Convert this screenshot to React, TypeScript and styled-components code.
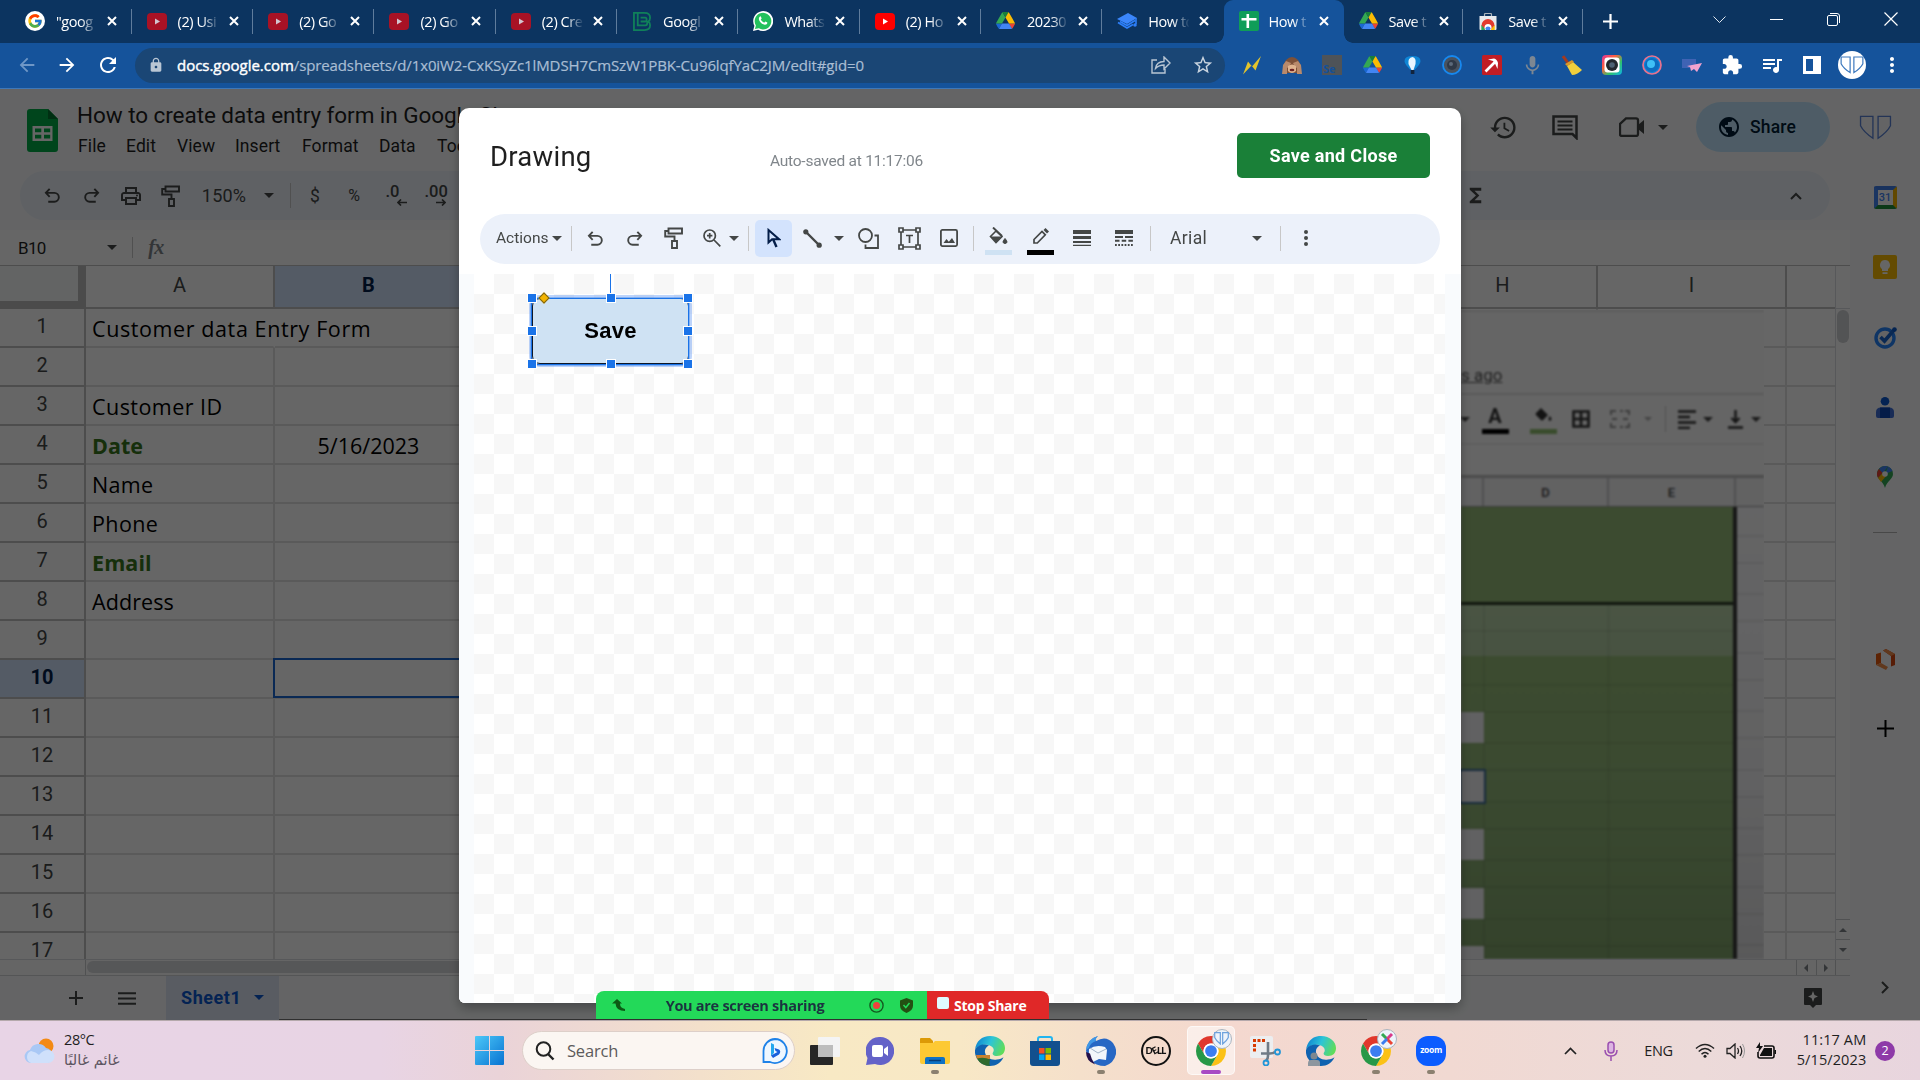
import React from "react";
import styled, { createGlobalStyle, css } from "styled-components";
import { FcGoogle } from "react-icons/fc";
import {
  MdArrowBack, MdArrowForward, MdRefresh, MdLock, MdStarOutline, MdExtension, MdQueueMusic,
  MdHistory, MdPublic, MdOutlinePrint, MdFunctions, MdMic, MdMoreVert,
} from "react-icons/md";

const Global = createGlobalStyle`
  html, body { margin: 0; padding: 0; overflow: hidden; }
  body { width: 1920px; height: 1080px; font-family: "Open Sans", "Noto Sans", sans-serif; }
  * { box-sizing: border-box; }
  svg { display: block; flex: none; }
`;

const ROBOTO = `Roboto, "Liberation Sans", sans-serif`;
const SEGOE = `"Open Sans", "Noto Sans", sans-serif`;

/* ---------- shared parts ---------- */

const Text = styled.span<{ $size: number; $color?: string; $weight?: number; $ls?: number; $font?: string }>`
  font-family: ${(p) => p.$font || ROBOTO};
  font-size: ${(p) => p.$size}px;
  font-weight: ${(p) => p.$weight || 400};
  letter-spacing: ${(p) => p.$ls || 0}px;
  color: ${(p) => p.$color || "#1f1f1f"};
  white-space: nowrap;
`;

const Slot = styled.div<{ $w: number; $start?: boolean }>`
  width: ${(p) => p.$w}px;
  height: 100%;
  flex: none;
  display: flex;
  align-items: center;
  justify-content: ${(p) => (p.$start ? "flex-start" : "center")};
`;

const Divider = styled.i<{ $h: number; $color?: string }>`
  width: 1px;
  height: ${(p) => p.$h}px;
  background: ${(p) => p.$color || "#c7c7c7"};
`;

const Caret = styled.i<{ $color?: string; $s?: number }>`
  width: 0;
  height: 0;
  border: ${(p) => p.$s || 5}px solid transparent;
  border-top-color: ${(p) => p.$color || "#444746"};
  border-bottom: 0;
`;

const Spacer = styled.div`
  flex: 1;
`;

type SvgProps = { w: number; h?: number; vb?: string; children: React.ReactNode };
const Icon = ({ w, h, vb = "0 0 24 24", children }: SvgProps) => (
  <svg width={w} height={h || w} viewBox={vb} fill="none" preserveAspectRatio="none">{children}</svg>
);

/* ---------- frame ---------- */

const Screen = styled.div`
  position: relative;
  width: 1920px;
  height: 1080px;
  display: flex;
  flex-direction: column;
  overflow: hidden;
`;

/* ---------- browser tabs ---------- */

const TabStrip = styled.div`
  height: 43px;
  flex: none;
  display: flex;
  align-items: center;
  background: #0c3460;
  padding-left: 10px;
`;

const Tab = styled.div<{ $w: number; $active?: boolean; $line?: boolean }>`
  width: ${(p) => p.$w}px;
  height: 43px;
  flex: none;
  display: flex;
  align-items: center;
  padding: 0 0 1px 15px;
  position: relative;
  ${(p) =>
    p.$active &&
    css`
      background: #15539b;
      border-radius: 9px 9px 0 0;
      &::before, &::after {
        content: "";
        position: absolute;
        bottom: 0;
        width: 9px;
        height: 9px;
      }
      &::before { left: -9px; background: radial-gradient(circle at 0 0, transparent 8.5px, #15539b 9px); }
      &::after { right: -9px; background: radial-gradient(circle at 100% 0, transparent 8.5px, #15539b 9px); }
    `}
  ${(p) =>
    p.$line &&
    css`
      &::after {
        content: "";
        position: absolute;
        right: 0;
        top: 9px;
        height: 25px;
        width: 1px;
        background: #5f7c9c;
      }
    `}
`;

const Favicon = styled.div`
  width: 20px;
  height: 20px;
  flex: none;
  display: flex;
  align-items: center;
  justify-content: center;
`;

const TabTitle = styled.div<{ $w: number }>`
  margin-left: ${(p) => p.$w - 30}px;
  width: ${(p) => p.$w}px;
  flex: none;
  white-space: nowrap;
  color: #fff;
  font: 400 14.5px ${SEGOE};
  letter-spacing: -0.45px;
  mask-image: linear-gradient(90deg, #000 60%, transparent 102%);
`;

const GoogleDisc = styled.div`
  width: 20px;
  height: 20px;
  border-radius: 50%;
  background: #fff;
  display: flex;
  align-items: center;
  justify-content: center;
`;

const YouTube = ({ dim }: { dim?: boolean }) => (
  <Icon w={20} h={17} vb="0 0 20 17">
    <rect width="20" height="17" rx="4" fill={dim ? "#a81225" : "#ff0000"} />
    <path d="M8 5.500l5 3-5 3z" fill={dim ? "#d3c5cf" : "#fff"} />
  </Icon>
);

const Drive = ({ s = 19 }: { s?: number }) => (
  <Icon w={s} h={s * 0.9} vb="0 0 87.3 78">
    <path d="m6.6 66.85 3.85 6.65c.8 1.4 1.95 2.5 3.3 3.3l13.75-23.8h-27.5c0 1.55.4 3.1 1.2 4.5z" fill="#1967d2" />
    <path d="m43.65 25-13.75-23.8c-1.35.8-2.5 1.9-3.3 3.3l-25.4 44a9.06 9.06 0 0 0-1.2 4.5h27.5z" fill="#34a853" />
    <path d="m73.55 76.8c1.35-.8 2.5-1.9 3.3-3.3l9.25-16c.8-1.4 1.2-2.95 1.2-4.5h-27.5l5.85 11.5z" fill="#ea4335" />
    <path d="m43.65 25 13.75-23.8c-1.35-.8-2.9-1.2-4.5-1.2h-18.5c-1.6 0-3.15.45-4.5 1.2z" fill="#188038" />
    <path d="m59.8 53h-32.3l-13.75 23.8c1.35.8 2.9 1.2 4.5 1.2h50.8c1.6 0 3.15-.45 4.5-1.2z" fill="#4285f4" />
    <path d="m73.4 26.5-12.7-22c-.8-1.4-1.95-2.5-3.3-3.3l-13.75 23.8 16.15 28h27.45c0-1.55-.4-3.1-1.2-4.5z" fill="#fbbc04" />
  </Icon>
);

const WebStore = () => (
  <Icon w={18} h={17} vb="0 0 18 17">
    <path d="M5.500 4V1.500q0-1 1-1h5q1 0 1 1V4" stroke="#aab3bb" strokeWidth="1.200" />
    <path d="M.5 3h17v13q0 1-1 1h-15q-1 0-1-1z" fill="#e8eaed" />
    <path d="M2.500 12.500a6.500 6.500 0 0 1 13 0l-2.500 4.500H5z" fill="#e33b2e" />
    <path d="M2.300 12l4.700 5H2.300z" fill="#34a853" />
    <path d="M15.700 12L11 17h4.700z" fill="#fbbc04" />
    <circle cx="9" cy="14.500" r="3.500" fill="#fff" />
    <path d="M6.300 15.500a2.800 2.800 0 0 1 5.400 0L11 17H7z" fill="#4285f4" />
  </Icon>
);

const TabClose = () => (
  <Icon w={10} vb="0 0 10 10">
    <path d="M1 1l8 8M9 1l-8 8" stroke="#fff" strokeWidth="2" />
  </Icon>
);

const tabs: { icon: React.ReactNode; title: string; active?: boolean; w: number; line?: boolean; tw?: number }[] = [
  { icon: <GoogleDisc><FcGoogle size={16} /></GoogleDisc>, title: "\"goog", w: 121.6, line: true },
  { icon: <YouTube dim />, title: "(2) Usi", w: 121.6, line: true },
  { icon: <YouTube dim />, title: "(2) Go", w: 121.3, line: true },
  { icon: <YouTube dim />, title: "(2) Go", w: 121.3, line: true },
  { icon: <YouTube dim />, title: "(2) Cre", w: 121.3, line: true },
  {
    icon: (
      <Icon w={19} vb="0 0 20 20">
        <path d="M6 1H1v18h11q6 0 6-5 0-3-2-4 2-1 2-4 0-5-6-5H5v13h8q2 0 2-2.500T13 10H8M8 6h5q2 0 1 4" stroke="#10805a" strokeWidth="1.900" />
      </Icon>
    ),
    title: "Googl", w: 121.3, line: true,
  },
  {
    icon: (
      <Icon w={20}>
        <path d="M0 24l1.700-6.200A12 12 0 1 1 6.200 22.400z" fill="#fff" />
        <path d="M2.300 21.700l1.200-4.300A10 10 0 1 1 7 20.800z" fill="#23c15c" />
        <path d="M8.300 6.500c.5-.4 1 0 1.200.4l.8 1.900c0 .7-.8 1-1 1.500 1 1.800 2.300 3 4.200 3.700.6-.3 1-1.300 1.500-1.300l2.200 1.100c.3 1.600-1.300 2.900-3.100 2.700-4-.9-6.700-3.900-7.100-7 0-1.200.5-2.300 1.300-3z" fill="#fff" />
      </Icon>
    ),
    title: "Whats", w: 121.3, line: true,
  },
  { icon: <YouTube />, title: "(2) Ho", w: 121.3, line: true },
  { icon: <Drive />, title: "20230", w: 121.3, line: true },
  {
    icon: (
      <Icon w={21} h={17} vb="0 0 21 17">
        <path d="M0 6l11-6 9 5-10 6z" fill="#3b86fb" />
        <path d="M1 9.500l9 5.500 6-3.500M19 5v6M3 8.500l7 4 8-5" stroke="#2d7ff9" strokeWidth="1.600" />
        <circle cx="18" cy="12" r="1.800" fill="#2d7ff9" />
      </Icon>
    ),
    title: "How to", w: 121.3,
  },
  {
    icon: (
      <Icon w={20} vb="0 0 20 20">
        <rect width="20" height="20" rx="2" fill="#0f9d58" />
        <path d="M8.800 3v14M2.500 8.300h15" stroke="#fff" strokeWidth="2.600" />
      </Icon>
    ),
    title: "How t", active: true, w: 120, tw: 40,
  },
  { icon: <Drive />, title: "Save t", w: 119.8, line: true, tw: 40 },
  { icon: <WebStore />, title: "Save t", w: 120, line: true, tw: 40 },
];

const WindowButtons = styled.div`
  display: flex;
  height: 38px;
  align-self: flex-start;
`;

/* ---------- address row ---------- */

const AddressRow = styled.div`
  height: 46px;
  flex: none;
  display: flex;
  align-items: center;
  background: #15539b;
  border-bottom: 1px solid #3f78b8;
  padding: 0 0 1px 6px;
`;

const Omnibox = styled.div`
  width: 1090px;
  height: 35px;
  border-radius: 18px;
  background: #1a4675;
  display: flex;
  align-items: center;
  margin-left: 7px;
`;

const Url = styled.div`
  font: 400 15px ${SEGOE};
  letter-spacing: -0.115px;
  color: #a9bdd3;
  white-space: nowrap;
  padding-bottom: 1px;
  -webkit-text-stroke: 0.2px #a9bdd3;
  b { font-weight: 400; letter-spacing: -0.02px; color: #fff; -webkit-text-stroke: 0.4px #fff; }
`;

const Extensions = styled.div`
  display: flex;
  height: 100%;
  margin-left: 7px;
`;

const Shield = ({ w, h, color, sw = 1.2 }: { w: number; h: number; color: string; sw?: number }) => (
  <Icon w={w} h={h} vb="0 0 32 28">
    <path d="M1.500 1.500h12v24.500q-9-7-12-14zM18.500 1.500h12v10.500q-3 7-12 14z" stroke={color} strokeWidth={sw} />
  </Icon>
);

const Avatar = styled.div`
  width: 28px;
  height: 28px;
  border-radius: 50%;
  background: #fff;
  display: flex;
  align-items: center;
  justify-content: center;
`;

const SeBadge = styled.div`
  width: 20px;
  height: 20px;
  background: #4e5358;
  color: #14509a;
  font: 700 11px ${SEGOE};
  line-height: 27px;
  padding-left: 1px;
  overflow: hidden;
`;

const extensions: React.ReactNode[] = [
  <Icon w={18} h={19} vb="0 0 18 19"><path d="M0 18.500L5 5.500l4 5L18 0l-5.500 14.500-4-5z" fill="#e3c42c" /></Icon>,
  <Icon w={20} h={18} vb="0 0 20 18">
    <path d="M4 4q6-6 12 0l3 6-3 7H4l-3-7z" fill="#7d5138" />
    <path d="M0 18l1-9 3-4 5 2-2 4-2 1v6zM20 18l-1-9-3-4-5 2 2 4 2 1v6z" fill="#b98a6b" />
    <path d="M6 10q4-3 8 0v5q-4 4-8 0z" fill="#e0b48f" />
    <ellipse cx="10" cy="14" rx="2.400" ry="1.300" fill="#6d2222" />
  </Icon>,
  <SeBadge>Se</SeBadge>,
  <Drive s={19} />,
  <Icon w={17} h={19} vb="0 0 17 19">
    <path d="M8.500 0q8 0 8 5 0 3-6 9h-4q-6-6-6-9 0-5 8-5z" fill="#0f86d6" />
    <path d="M8.500 1q4 1 3 7l-2 6h-2l-3-6q-1-6 4-7z" fill="#e8f6ff" />
    <rect x="6.800" y="14" width="3.600" height="4" fill="#12243c" />
  </Icon>,
  <Icon w={20} vb="0 0 20 20">
    <circle cx="10" cy="10" r="9" fill="#48525f" stroke="#1789f0" strokeWidth="1.800" />
    <circle cx="10" cy="10" r="5" fill="#2f3947" />
    <circle cx="9" cy="9" r="2" fill="#5c6a7a" />
  </Icon>,
  <Icon w={20} vb="0 0 20 20">
    <rect width="20" height="20" rx="1.500" fill="#c11d24" />
    <path d="M3.500 16.500L14 6" stroke="#fff" strokeWidth="2.600" />
    <path d="M6 4.500l6-1q3 .5 4 4.500l-.5 6-2.500-5.500L11 6z" fill="#fff" />
  </Icon>,
  <MdMic size={23} color="#7d8792" />,
  <Icon w={20} vb="0 0 20 20">
    <path d="M1 1l5 7" stroke="#a33a20" strokeWidth="3" />
    <path d="M5 11l6-4 9 8q-5 5-10 5z" fill="#f1cf3c" />
    <path d="M3 9l7-4 2 2-7 4z" fill="#d9982a" />
  </Icon>,
  <Icon w={20} vb="0 0 20 20">
    <defs>
      <linearGradient id="cam" x1="0" y1="0" x2="1" y2="1">
        <stop offset="0" stopColor="#e0349b" /><stop offset=".35" stopColor="#ff5f3c" />
        <stop offset=".65" stopColor="#2fc26b" /><stop offset="1" stopColor="#0fb4e6" />
      </linearGradient>
    </defs>
    <rect width="20" height="20" rx="4" fill="url(#cam)" />
    <rect x="2.500" y="2.500" width="15" height="15" rx="3" fill="#fff" />
    <circle cx="10" cy="10" r="6" fill="#23272d" />
    <circle cx="10" cy="10" r="2.800" fill="#4d6072" />
  </Icon>,
  <Icon w={20} vb="0 0 20 20">
    <circle cx="10" cy="10" r="9" fill="#1182d8" stroke="#e8728d" strokeWidth="1.700" />
    <circle cx="10" cy="10" r="7" fill="#0c6dc0" />
    <circle cx="9" cy="9" r="4" fill="#3fc0f6" />
  </Icon>,
  <Icon w={20} h={13} vb="0 0 20 13">
    <rect width="14" height="9" fill="#3f63b4" />
    <path d="M5 7l15-3-5 9-3-3-3 2-1-4z" fill="#f3a3cf" />
  </Icon>,
  <MdExtension size={22} color="#fff" />,
  <MdQueueMusic size={24} color="#fff" />,
  <Icon w={18} vb="0 0 18 18"><path d="M0 0h18v18H0zM3 3v12h7V3z" fill="#fff" fillRule="evenodd" /></Icon>,
  <Avatar><Shield w={24} h={18} color="#3c78bd" sw={1.600} /></Avatar>,
  <MdMoreVert size={24} color="#fff" />,
];

const Browser = () => (
  <>
    <TabStrip>
      {tabs.map((t, i) => (
        <Tab key={i} $w={t.w} $active={t.active} $line={t.line}>
          <Favicon>{t.icon}</Favicon>
          <TabTitle $w={t.tw || 41}>{t.title}</TabTitle>
          <Slot $w={30}><TabClose /></Slot>
        </Tab>
      ))}
      <Slot $w={55}>
        <Icon w={15} vb="0 0 15 15"><path d="M7.500 0v15M0 7.500h15" stroke="#fff" strokeWidth="2.200" /></Icon>
      </Slot>
      <Spacer />
      <WindowButtons>
        <Slot $w={57}><Icon w={13} h={7} vb="0 0 13 7"><path d="M.5.5l6 6 6-6" stroke="#dfe7ef" /></Icon></Slot>
        <Slot $w={57}><Icon w={13} h={1} vb="0 0 13 1"><path d="M0 .5h13" stroke="#fff" strokeWidth="1.400" /></Icon></Slot>
        <Slot $w={57}>
          <Icon w={13} h={13} vb="0 0 13 13">
            <rect x=".5" y="2.500" width="10" height="10" rx="1.500" stroke="#fff" />
            <path d="M3 .5h7q2.500 0 2.500 2.500v7" stroke="#fff" />
          </Icon>
        </Slot>
        <Slot $w={58}><Icon w={14} vb="0 0 14 14"><path d="M.5.5l13 13M13.500.5l-13 13" stroke="#fff" strokeWidth="1.200" /></Icon></Slot>
      </WindowButtons>
    </TabStrip>
    <AddressRow>
      <Slot $w={41}><MdArrowBack size={22} color="#6f97c6" /></Slot>
      <Slot $w={40}><MdArrowForward size={22} color="#fff" /></Slot>
      <Slot $w={41}><MdRefresh size={24} color="#fff" /></Slot>
      <Omnibox>
        <Slot $w={42}><MdLock size={16} color="#b9c6d4" /></Slot>
        <Url><b>docs.google.com</b>/spreadsheets/d/1x0iW2-CxKSyZc1lMDSH7CmSzW1PBK-Cu96lqfYaC2JM/edit#gid=0</Url>
        <Spacer />
        <Slot $w={40}>
          <Icon w={20} h={18} vb="0 0 20 18">
            <path d="M6 4H1v13h13v-4M4.500 12.500q1-7 8.500-7V1l6 6-6 6V9q-5 0-8.500 3.500z" stroke="#b9c6d4" strokeWidth="1.400" />
          </Icon>
        </Slot>
        <Slot $w={44}><MdStarOutline size={22} color="#c9d4df" /></Slot>
      </Omnibox>
      <Extensions>{extensions.map((e, i) => <Slot $w={40} key={i}>{e}</Slot>)}</Extensions>
    </AddressRow>
  </>
);

/* ---------- spreadsheet page ---------- */

const Docs = styled.div`
  position: relative;
  height: 931px;
  flex: none;
  display: flex;
  background: #f9fbfd;
`;

const DocsMain = styled.div`
  width: 1850px;
  flex: none;
  display: flex;
  flex-direction: column;
`;

const DocsHeader = styled.div`
  height: 81px;
  width: 1920px;
  display: flex;
  padding-left: 27px;
`;

const TitleBlock = styled.div`
  flex: 1;
  margin-left: 19px;
  padding-top: 11px;
`;

const DocTitle = styled.div`
  height: 30px;
  display: flex;
  align-items: center;
`;

const MenuRow = styled.div`
  height: 32px;
  display: flex;
  align-items: center;
  margin-left: 1px;
`;

const HeaderTools = styled.div`
  height: 50px;
  margin-top: 13px;
  flex: none;
  display: flex;
  align-items: center;
`;

const SheetsLogoWrap = styled.div`
  padding-top: 20px;
`;

const ShareButton = styled.div`
  width: 134px;
  height: 50px;
  margin-left: 23px;
  border-radius: 25px;
  background: #c2e7ff;
  display: flex;
  align-items: center;
  padding-left: 21px;
  gap: 9px;
`;

const DocsToolbar = styled.div`
  height: 49px;
  margin: 1px 20px 10px 20px;
  border-radius: 25px;
  background: #edf2fa;
  display: flex;
  align-items: center;
  padding-left: 13px;
`;

const FormulaBar = styled.div`
  height: 36px;
  background: #fff;
  border-bottom: 1px solid #c0c0c0;
  display: flex;
  align-items: center;
  padding-left: 18px;
`;

const GridArea = styled.div`
  height: 693px;
  display: flex;
  overflow: hidden;
`;

const Grid = styled.div`
  width: 1835px;
  overflow: hidden;
  background: #fff;
`;

const GridHead = styled.div`
  display: flex;
  height: 43px;
`;

const Corner = styled.div`
  width: 86px;
  flex: none;
  background: #f8f9fa;
  border-right: 8px solid #bcbcbc;
  border-bottom: 8px solid #bcbcbc;
`;

const ColHead = styled.div<{ $sel?: boolean }>`
  width: 189px;
  flex: none;
  display: flex;
  align-items: center;
  justify-content: center;
  padding-bottom: 4px;
  border-right: 2px solid #c0c0c0;
  border-bottom: 2px solid #c0c0c0;
  background: ${(p) => (p.$sel ? "#d3e3fd" : "#fff")};
`;

const GridRow = styled.div`
  display: flex;
  height: 39px;
`;

const RowHead = styled.div<{ $sel?: boolean }>`
  width: 86px;
  flex: none;
  display: flex;
  align-items: center;
  justify-content: center;
  border-right: 2px solid #c0c0c0;
  border-bottom: 2px solid #c0c0c0;
  padding-bottom: 4px;
  background: ${(p) => (p.$sel ? "#d3e3fd" : "#fff")};
`;

const Cell = styled.div<{ $open?: boolean; $center?: boolean; $sel?: boolean }>`
  width: 189px;
  flex: none;
  display: flex;
  align-items: center;
  padding: 2px 0 0 ${(p) => (p.$center ? 0 : 6)}px;
  justify-content: ${(p) => (p.$center ? "center" : "flex-start")};
  border-right: 2px solid ${(p) => (p.$open ? "transparent" : "#e1e1e1")};
  border-bottom: 2px solid #e1e1e1;
  ${(p) =>
    p.$sel &&
    css`
      position: relative;
      &::after {
        content: "";
        position: absolute;
        inset: -2px 0 -1px -2px;
        border: 2px solid #1967d2;
      }
    `}
`;

const VScroll = styled.div`
  width: 15px;
  border-left: 1px solid #dadce0;
  background: #fff;
  display: flex;
  flex-direction: column;
`;

const VHead = styled.div`
  height: 43px;
  border-bottom: 1px solid #dadce0;
`;

const VThumb = styled.div`
  width: 12px;
  height: 33px;
  margin: 1px auto 0;
  border-radius: 6px;
  background: #d0d1d4;
`;

const ScrollStep = styled.div<{ $dir: "up" | "down" | "left" | "right" }>`
  width: ${(p) => (p.$dir === "up" || p.$dir === "down" ? 14 : 19.5)}px;
  height: ${(p) => (p.$dir === "up" || p.$dir === "down" ? 20 : 15)}px;
  display: flex;
  align-items: center;
  justify-content: center;
  ${(p) => (p.$dir === "up" || p.$dir === "down" ? "border-top" : "border-left")}: 1px solid #c9cbce;
  i { transform: rotate(${(p) => ({ up: 180, down: 0, left: 90, right: -90 }[p.$dir])}deg); }
`;

const HScroll = styled.div`
  height: 17px;
  display: flex;
  background: #fcfcfd;
  border-top: 1px solid #dadce0;
  border-bottom: 1px solid #d2d4d7;
`;

const HThumb = styled.div`
  width: 1100px;
  height: 12px;
  margin: 1px 0 0 1px;
  border-radius: 6px;
  background: #d8d9dc;
`;

const HCorner = styled.div`
  width: 86px;
  border-right: 1px solid #c9cbce;
`;

const HEnd = styled.div`
  width: 15px;
  border-left: 1px solid #c9cbce;
`;

const SheetBar = styled.div`
  height: 44px;
  display: flex;
  align-items: center;
  padding-left: 51px;
`;

const SheetTab = styled.div`
  width: 113px;
  height: 44px;
  margin-left: 14px;
  background: #dfe6f5;
  display: flex;
  align-items: center;
  padding: 0 0 1px 15px;
  gap: 13px;
`;

const SidePanel = styled.div`
  width: 70px;
  padding-top: 73px;
  display: flex;
  flex-direction: column;
  align-items: center;
`;

const SideSlot = styled.div<{ $h: number }>`
  height: ${(p) => p.$h}px;
  flex: none;
  display: flex;
  align-items: center;
`;

const SideRule = styled.i`
  width: 24px;
  height: 1px;
  background: #b5b5b5;
`;

const CalendarIcon = styled.div`
  width: 23px;
  height: 23px;
  border: 4px solid;
  border-color: #3f7de8 #f4b400 #1e8e3e #4285f4;
  border-radius: 2px;
  background: #fff;
  color: #4285f4;
  font: 500 11px/15px ${ROBOTO};
  text-align: center;
`;

/* screenshot that was inserted into the sheet */

const Photo = styled.div`
  position: absolute;
  left: 1461px;
  top: 221px;
  width: 303px;
  height: 649px;
  overflow: hidden;
  background: #fdfdfd;
`;

const PhotoBody = styled.div`
  filter: blur(0.8px);
  display: flex;
  flex-direction: column;
`;

const PhotoTop = styled.div`
  height: 85px;
  padding-top: 53px;
  border-top: 2px solid #e6e6e6;
  border-bottom: 2px solid #e0e0e0;
  font: 400 17px/20px ${ROBOTO};
  color: #555;
  text-decoration: underline;
`;

const PhotoTools = styled.div`
  height: 50px;
  display: flex;
  align-items: center;
  border-bottom: 2px solid #ececec;
`;

const PhotoGlyph = styled.div<{ $bar?: string }>`
  width: 27px;
  height: 29px;
  display: flex;
  justify-content: center;
  font: 700 20px/22px ${ROBOTO};
  color: #333;
  border-bottom: 5px solid ${(p) => p.$bar || "transparent"};
`;

const PhotoHead = styled.div`
  height: 32px;
  margin-top: 30px;
  display: flex;
  border-top: 3px solid #bdbdbd;
  border-bottom: 1px solid #999;
  background: #f4f4f6;
`;

const PhotoCol = styled.div<{ $w: number }>`
  width: ${(p) => p.$w}px;
  border-right: 2px solid #c8c8c8;
  display: flex;
  align-items: center;
  justify-content: center;
  font: 500 13px ${ROBOTO};
  color: #444;
`;

const PhotoGreen = styled.div`
  width: 276px;
  height: 452px;
  border-right: 4px solid #3a3a3a;
  display: flex;
  flex-direction: column;
`;

const ruled = `repeating-linear-gradient(transparent 0 28px, rgba(0,0,0,.07) 28px 30px, transparent 30px 55px, rgba(0,0,0,.07) 55px 57px, transparent 57px 58.5px)`;
const columned = `linear-gradient(90deg, transparent 22px, rgba(0,0,0,.07) 22px 24px, transparent 24px 146px, rgba(0,0,0,.05) 146px 149px, transparent 149px)`;

const Band = styled.div<{ $h: number; $bg: string; $line?: boolean }>`
  height: ${(p) => p.$h}px;
  flex: none;
  background: ${(p) => p.$bg};
  ${(p) => p.$line && css`border-bottom: 3px solid #2c3a26;`}
`;

const Inputs = styled.div`
  padding-top: 56px;
  display: flex;
  flex-direction: column;
  gap: 27.500px;
`;

const Input = styled.div<{ $focus?: boolean }>`
  width: 23px;
  height: 31px;
  background: #f2f2f4;
  ${(p) => p.$focus && css`box-shadow: 0 0 0 2px #3a6a98;`}
`;

const PhotoRight = styled.div`
  flex: 1;
  background: ${ruled}, linear-gradient(#fafafc, #f3f3f5 60%, #dfdfe1);
`;

const PhotoSplit = styled.div`
  display: flex;
`;

/* toolbar glyphs */

const S = "#444746";
const Undo = ({ s = 18, c = S }) => (
  <Icon w={s} h={s} vb="0 0 18 18">
    <path d="M6 2L2 6.200 6 10.400M2.300 6.200H11a4.600 4.600 0 0 1 0 9.400H4.500" stroke={c} strokeWidth="2" />
  </Icon>
);
const Redo = ({ s = 18, c = S }) => (
  <Icon w={s} h={s} vb="0 0 18 18">
    <path d="M12 2l4 4.200-4 4.200M15.700 6.200H7a4.600 4.600 0 0 0 0 9.400h6.500" stroke={c} strokeWidth="2" />
  </Icon>
);
const Paint = () => (
  <Icon w={19} h={22} vb="0 0 19 22">
    <path d="M4.500 1.500H18v5H4.500zM4.500 4H1.200v5.500h9.300V14M8 14h5v7H8z" stroke={S} strokeWidth="1.900" />
  </Icon>
);

const menus: [string, number][] = [
  ["File", 48], ["Edit", 51], ["View", 58], ["Insert", 67], ["Format", 77], ["Data", 58], ["Tools", 60],
];

const cells: Record<number, { a?: string; b?: string; green?: boolean; ls?: number }> = {
  1: { a: "Customer data Entry Form", ls: 0.6 },
  3: { a: "Customer ID", ls: 0.45 },
  4: { a: "Date", b: "5/16/2023", green: true },
  5: { a: "Name", ls: 0.3 },
  6: { a: "Phone", ls: 0.4 },
  7: { a: "Email", green: true, ls: 0.1 },
  8: { a: "Address", ls: 0.1 },
};
const columns = ["A", "B", "C", "D", "E", "F", "G", "H", "I", ""];
const rows = Array.from({ length: 17 }, (_, i) => i + 1);

const DecimalBox = styled.div<{ $w: number }>`
  width: ${(p) => p.$w}px;
  display: flex;
  flex-direction: column;
  align-items: flex-end;
  font: 500 16.5px/14px ${ROBOTO};
  color: ${S};
  span { align-self: flex-start; }
`;

const Decimal = ({ text, dir }: { text: string; dir: "left" | "right" }) => (
  <DecimalBox $w={21}>
    <span>{text}</span>
    <Icon w={10} h={7} vb="0 0 10 7">
      <path d={dir === "left" ? "M10 3.500H1M4 .5l-3 3 3 3" : "M0 3.500h9M6 .5l3 3-3 3"} stroke={S} strokeWidth="1.700" />
    </Icon>
  </DecimalBox>
);

const Spreadsheet = () => (
  <>
    <DocsMain>
      <DocsHeader>
        <SheetsLogoWrap>
          <Icon w={31} h={43} vb="0 0 31 43">
            <path d="M3 0h18l10 10v30q0 3-3 3H3q-3 0-3-3V3q0-3 3-3z" fill="#00ac47" />
            <path d="M21 0l10 10H21z" fill="#00772f" />
            <path d="M5.500 17h20v15h-20zM8 19.500v3.700h6.300v-3.700zM17 19.500v3.700h6.200v-3.700zM8 25.800v3.700h6.300v-3.700zM17 25.800v3.700h6.200v-3.700z" fill="#fff" fillRule="evenodd" />
          </Icon>
        </SheetsLogoWrap>
        <TitleBlock>
          <DocTitle><Text $size={22.500} $ls={-0.060}>How to create data entry form in Google Sheets part</Text></DocTitle>
          <MenuRow>
            {menus.map(([m, w]) => <Slot key={m} $w={w} $start><Text $size={17.500} $ls={0.100}>{m}</Text></Slot>)}
          </MenuRow>
        </TitleBlock>
        <HeaderTools>
          <Slot $w={30}><MdHistory size={29} color={S} /></Slot>
          <Slot $w={28} />
          <Slot $w={38}>
            <Icon w={26} h={25} vb="0 0 26 25">
              <path d="M1.500 1.500h23v21.500l-4-4h-19z" stroke={S} strokeWidth="2.500" />
              <path d="M5.500 6.500h15M5.500 10.500h15M5.500 14.500h15" stroke={S} strokeWidth="2" />
            </Icon>
          </Slot>
          <Slot $w={28} />
          <Slot $w={40}>
            <Icon w={26} h={20} vb="0 0 26 20">
              <path d="M7 1.300h10q2 0 2 2V17q0 2-2 2H3q-2 0-2-2V7z" stroke={S} strokeWidth="2.300" />
              <path d="M19 8l6-5v14l-6-5z" fill={S} />
            </Icon>
          </Slot>
          <Slot $w={21}><Caret /></Slot>
          <ShareButton>
            <MdPublic size={24} color="#001d35" />
            <Text $size={17.500} $weight={500} $ls={0.200} $color="#001d35">Share</Text>
          </ShareButton>
          <Slot $w={90}><Shield w={33} h={25} color="#5b83d6" sw={1.300} /></Slot>
        </HeaderTools>
      </DocsHeader>
      <DocsToolbar>
        <Slot $w={39}><Undo s={17} /></Slot>
        <Slot $w={39}><Redo s={17} /></Slot>
        <Slot $w={40}><MdOutlinePrint size={24} color={S} /></Slot>
        <Slot $w={39}><Paint /></Slot>
        <Slot $w={68}><Text $size={18} $color={S} $ls={0.200}>150%</Text></Slot>
        <Slot $w={21}><Caret /></Slot>
        <Slot $w={22}><Divider $h={25} /></Slot>
        <Slot $w={28}><Text $size={17.500} $color={S}>$</Text></Slot>
        <Slot $w={50}><Text $size={16} $color={S}>%</Text></Slot>
        <Slot $w={34}><Decimal text=".0" dir="left" /></Slot>
        <Slot $w={44}><Decimal text=".00" dir="right" /></Slot>
        <Slot $w={1000} />
        <Slot $w={37}><MdFunctions size={23} color={S} /></Slot>
        <Spacer />
        <Slot $w={69}><Icon w={12} h={8} vb="0 0 12 8"><path d="M1 7l5-5 5 5" stroke={S} strokeWidth="2" /></Icon></Slot>
      </DocsToolbar>
      <FormulaBar>
        <Slot $w={84} $start><Text $size={17} $ls={-0.700}>B10</Text></Slot>
        <Slot $w={20}><Caret /></Slot>
        <Slot $w={20}><Divider $h={21} /></Slot>
        <Slot $w={28}><Text $size={20} $weight={700} $color="#80868b" $ls={-0.500} $font={`"Liberation Serif", serif`}><i>fx</i></Text></Slot>
      </FormulaBar>
      <GridArea>
        <Grid>
          <GridHead>
            <Corner />
            {columns.map((c) => (
              <ColHead key={c} $sel={c === "B"}>
                <Text $size={20} $weight={c === "B" ? 700 : 400} $color={c === "B" ? "#041e49" : "#444746"}>{c}</Text>
              </ColHead>
            ))}
          </GridHead>
          {rows.map((r) => {
            const d = cells[r] || {};
            const color = d.green ? "#38761d" : "#000";
            return (
              <GridRow key={r}>
                <RowHead $sel={r === 10}>
                  <Text $size={20} $weight={r === 10 ? 700 : 400} $color={r === 10 ? "#041e49" : "#444746"}>{r}</Text>
                </RowHead>
                {columns.map((c) => (
                  <Cell key={c} $open={r === 1 && c === "A"} $center={c === "B"} $sel={r === 10 && c === "B"}>
                    {c === "A" && d.a && (
                      <Text $size={21.500} $font={SEGOE} $ls={d.ls} $weight={d.green ? 700 : 400} $color={color}>{d.a}</Text>
                    )}
                    {c === "B" && d.b && <Text $size={21.500} $font={SEGOE} $color="#000">{d.b}</Text>}
                  </Cell>
                ))}
              </GridRow>
            );
          })}
        </Grid>
        <VScroll>
          <VHead />
          <VThumb />
          <Spacer />
          <ScrollStep $dir="up"><Caret $s={4} $color="#80868b" /></ScrollStep>
          <ScrollStep $dir="down"><Caret $s={4} $color="#80868b" /></ScrollStep>
        </VScroll>
      </GridArea>
      <HScroll>
        <HCorner />
        <HThumb />
        <Spacer />
        <ScrollStep $dir="left"><Caret $s={4} $color="#80868b" /></ScrollStep>
        <ScrollStep $dir="right"><Caret $s={4} $color="#80868b" /></ScrollStep>
        <HEnd />
      </HScroll>
      <SheetBar>
        <Slot $w={50}><Icon w={14} vb="0 0 14 14"><path d="M7 0v14M0 7h14" stroke={S} strokeWidth="2" /></Icon></Slot>
        <Slot $w={51}><Icon w={18} h={13} vb="0 0 18 13"><path d="M0 1.200h18M0 6.500h18M0 11.800h18" stroke={S} strokeWidth="2" /></Icon></Slot>
        <SheetTab>
          <Text $size={18} $weight={700} $ls={0.550} $color="#0b57d0">Sheet1</Text>
          <Caret $color="#0b57d0" />
        </SheetTab>
        <Spacer />
        <Slot $w={74}>
          <Icon w={18} h={20} vb="0 0 18 20">
            <path d="M1 0h16q1 0 1 1v15q0 1-1 1h-5l-3 3-3-3H1q-1 0-1-1V1q0-1 1-1z" fill={S} />
            <path d="M9 3l1.500 4L14 8.500 10.500 10 9 14l-1.500-4L4 8.500 7.500 7z" fill="#fff" />
          </Icon>
        </Slot>
      </SheetBar>
    </DocsMain>
    <SidePanel>
      <SideSlot $h={70}><CalendarIcon>31</CalendarIcon></SideSlot>
      <SideSlot $h={70}>
        <Icon w={24} vb="0 0 24 24">
          <rect width="24" height="24" rx="2" fill="#fbbc04" />
          <path d="M12 5a5 5 0 0 1 3 9v2H9v-2a5 5 0 0 1 3-9zM9.500 17.300h5v1.700h-5z" fill="#fff" />
        </Icon>
      </SideSlot>
      <SideSlot $h={70}>
        <Icon w={23} vb="0 0 23 23">
          <circle cx="11" cy="12" r="9" stroke="#2684fc" strokeWidth="3.400" />
          <path d="M6.500 11l4 4L20 4" stroke="#1a66d0" strokeWidth="3.600" />
          <circle cx="20.500" cy="3.500" r="2.300" fill="#0b57c8" />
        </Icon>
      </SideSlot>
      <SideSlot $h={70}>
        <Icon w={18} h={21} vb="0 0 18 21">
          <circle cx="9" cy="4.300" r="4.300" fill="#0b57d0" />
          <path d="M5 10.500h8q5 0 5 4.500v4q0 2-2 2H2q-2 0-2-2v-4q0-4.500 5-4.500z" fill="#3f6fd8" />
          <rect x="4" y="10.500" width="10" height="10.500" fill="#0b47b4" />
        </Icon>
      </SideSlot>
      <SideSlot $h={70}>
        <Icon w={16} h={22} vb="0 0 16 22">
          <path d="M8 0a8 8 0 0 1 8 8c0 5-6 7-8 14C6 15 0 13 0 8a8 8 0 0 1 8-8z" fill="#34a853" />
          <path d="M2 3a8 8 0 0 1 9-2.400L5 8z" fill="#4285f4" />
          <path d="M11 .6A8 8 0 0 1 15.500 5L8 8z" fill="#4285f4" />
          <path d="M2 3L5.500 7 1 12Q-1.500 7 2 3z" fill="#ea4335" />
          <path d="M1 12l5-5.500L10 9l-6 7z" fill="#fbbc04" />
          <circle cx="8" cy="8" r="2.800" fill="#fff" />
        </Icon>
      </SideSlot>
      <SideSlot $h={41}><SideRule /></SideSlot>
      <SideSlot $h={71} />
      <SideSlot $h={70}>
        <Icon w={19} h={21} vb="0 0 19 21">
          <path d="M0 5l5-1.500V14l-5 2z" fill="#e8590c" />
          <path d="M7 1.500L10 0l9 5v11l-4 1.500V7z" fill="#d9480f" />
          <path d="M7 1.500L10 0l9 5-4 2z" fill="#f08c4a" />
          <path d="M0 16l5-2 7 4-2 3z" fill="#f08c4a" />
        </Icon>
      </SideSlot>
      <SideSlot $h={69}><Icon w={17} vb="0 0 17 17"><path d="M8.500 0v17M0 8.500h17" stroke="#000" strokeWidth="2" /></Icon></SideSlot>
      <Spacer />
      <SideSlot $h={66}>
        <Icon w={8} h={13} vb="0 0 8 13"><path d="M1 1l5.500 5.500L1 12" stroke={S} strokeWidth="2" /></Icon>
      </SideSlot>
    </SidePanel>
    <Photo>
      <PhotoBody>
        <PhotoTop>s ago</PhotoTop>
        <PhotoTools>
          <Slot $w={8}><Caret $color="#444" /></Slot>
          <Slot $w={52}><PhotoGlyph $bar="#000">A</PhotoGlyph></Slot>
          <Slot $w={45}>
            <PhotoGlyph $bar="#8fbf6f">
              <Icon w={19} h={19} vb="0 0 19 19"><path d="M5 1l9 9-5 5q-1 1-2 0l-5-5q-1-1 0-2l5-5zM16 11q3 4 0 5-3-1 0-5z" fill="#333" /></Icon>
            </PhotoGlyph>
          </Slot>
          <Slot $w={30}><Icon w={18} vb="0 0 18 18"><path d="M1.500 1.500h15v15h-15zM9 1v16M1 9h16" stroke="#333" strokeWidth="2.600" /></Icon></Slot>
          <Slot $w={48}><Icon w={20} h={18} vb="0 0 20 18"><path d="M1 5V1h5M10 1h3M15 1h4v4M1 13v4h5M10 17h3M15 17h4v-4M2 9h5M18 9h-5" stroke="#999" strokeWidth="2" /></Icon></Slot>
          <Slot $w={8}><Caret $s={4} $color="#aaa" /></Slot>
          <Slot $w={26}><Divider $h={26} /></Slot>
          <Slot $w={18}><Icon w={18} h={19} vb="0 0 18 19"><path d="M0 1.500h18M0 7h12M0 12.500h18M0 18h12" stroke="#333" strokeWidth="2.300" /></Icon></Slot>
          <Slot $w={24}><Caret $color="#444" /></Slot>
          <Slot $w={30}><Icon w={15} h={19} vb="0 0 15 19"><path d="M7.500 0v12M3.500 8l4 4 4-4M0 17.500h15" stroke="#333" strokeWidth="2.400" /></Icon></Slot>
          <Slot $w={12}><Caret $color="#444" /></Slot>
        </PhotoTools>
        <PhotoHead>
          <PhotoCol $w={23} /><PhotoCol $w={125}>D</PhotoCol><PhotoCol $w={127}>E</PhotoCol>
        </PhotoHead>
        <PhotoSplit>
          <PhotoGreen>
            <Band $h={98} $bg="#96bb78" $line />
            <Band $h={51} $bg={`${columned}, linear-gradient(transparent 25px, rgba(0,0,0,.07) 25px 27px, transparent 27px), linear-gradient(#b9d4aa, #b3cea4)`} />
            <Band $h={303} $bg={`${columned}, ${ruled}, linear-gradient(#97bc78, #93b87a 40%, #82a56c)`}>
              <Inputs><Input /><Input $focus /><Input /><Input /><Input /></Inputs>
            </Band>
          </PhotoGreen>
          <PhotoRight />
        </PhotoSplit>
      </PhotoBody>
    </Photo>
  </>
);

/* ---------- drawing dialog ---------- */

const Overlay = styled.div`
  position: absolute;
  inset: 0;
  background: rgba(0, 0, 0, 0.6);
  padding: 19px 0 0 459px;
`;

const Dialog = styled.div`
  width: 1002px;
  height: 895px;
  background: #fff;
  border-radius: 10px 10px 6px 6px;
  overflow: hidden;
  display: flex;
  flex-direction: column;
  box-shadow: 0 5px 12px rgba(0, 0, 0, 0.3);
`;

const DialogHead = styled.div`
  height: 106px;
  flex: none;
  display: flex;
  padding-left: 31px;
`;

const DialogTitle = styled.div`
  width: 280px;
  padding-top: 33px;
  line-height: 32px;
`;

const SavedNote = styled.div`
  width: 467px;
  padding-top: 42px;
  line-height: 20px;
`;

const SaveClose = styled.div`
  width: 193px;
  height: 45px;
  margin-top: 25px;
  padding-bottom: 1px;
  border-radius: 5px;
  background: #1a8038;
  display: flex;
  align-items: center;
  justify-content: center;
`;

const DrawTools = styled.div`
  width: 960px;
  height: 50px;
  margin: 0 0 10px 21px;
  border-radius: 25px;
  background: #ecf1fa;
  flex: none;
  display: flex;
  align-items: center;
  padding: 0 0 2px 16px;
`;

const ActiveTool = styled.div`
  width: 37px;
  height: 37px;
  flex: none;
  border-radius: 5px;
  background: #d3e3fd;
  display: flex;
  align-items: center;
  justify-content: center;
`;

const Swatched = styled.div<{ $bar: string }>`
  width: 27px;
  height: 28px;
  margin-top: 5px;
  border-bottom: 5px solid ${(p) => p.$bar};
  display: flex;
  justify-content: center;
`;

const CanvasFrame = styled.div`
  flex: 1;
  background: #fff;
  display: flex;
`;

const CanvasEdge = styled.div<{ $w: number }>`
  width: ${(p) => p.$w}px;
  background: #f9fbfd;
`;

const Canvas = styled.div`
  position: relative;
  width: 971px;
  height: 728px;
  background: repeating-conic-gradient(#fff 0 25%, #f7f7f7 0 50%) 20px 0 / 40px 40px;
`;

const Shape = styled.div`
  position: absolute;
  left: 58px;
  top: 24px;
  width: 157px;
  height: 66px;
  border: 1px solid #0e1726;
  border-radius: 8px;
  background: #cfe2f3;
  box-shadow: 0 0 0 3px rgba(66, 133, 244, 0.35);
  display: flex;
  align-items: center;
  justify-content: center;
`;

const SelectFrame = styled.div`
  position: absolute;
  left: 57px;
  top: 24px;
  width: 158px;
  height: 67px;
  border: 1px solid #1a73e8;
  outline: 1px solid rgba(26, 115, 232, 0.35);
  border-radius: 2px;
`;

const Stem = styled.i`
  position: absolute;
  left: 136px;
  top: 0;
  width: 1px;
  height: 22px;
  background: #1a73e8;
`;

const Handle = styled.i<{ $x: number; $y: number }>`
  position: absolute;
  left: ${(p) => p.$x - 5}px;
  top: ${(p) => p.$y - 5}px;
  width: 10px;
  height: 10px;
  background: #1a73e8;
  border: 1px solid #fff;
`;

const Diamond = styled.i`
  position: absolute;
  left: 66px;
  top: 20px;
  width: 8px;
  height: 8px;
  background: #f4b400;
  border: 1px solid #7d6310;
  transform: rotate(45deg);
`;

const handles: [number, number][] = [
  [58, 24], [137, 24], [214, 24], [58, 57], [214, 57], [58, 90], [137, 90], [214, 90],
];

const DrawingDialog = () => (
  <Dialog>
    <DialogHead>
      <DialogTitle><Text $size={27.500} $ls={0.250}>Drawing</Text></DialogTitle>
      <SavedNote><Text $size={15.500} $ls={-0.240} $color="#80868b">Auto-saved at 11:17:06</Text></SavedNote>
      <SaveClose><Text $size={18} $weight={700} $ls={0.300} $color="#fff">Save and Close</Text></SaveClose>
    </DialogHead>
    <DrawTools>
      <Slot $w={54} $start><Text $size={15.500} $color={S}>Actions</Text></Slot>
      <Slot $w={13}><Caret /></Slot>
      <Slot $w={16}><Divider $h={25} /></Slot>
      <Slot $w={32}><Undo s={17} /></Slot>
      <Slot $w={47}><Redo s={17} /></Slot>
      <Slot $w={30}><Paint /></Slot>
      <Slot $w={9} />
      <Slot $w={30}>
        <Icon w={18} h={18} vb="0 0 18 18">
          <circle cx="6.700" cy="6.700" r="5.700" stroke={S} strokeWidth="1.700" />
          <path d="M11 11l6.300 6.300M6.700 4v5.400M4 6.700h5.400" stroke={S} strokeWidth="1.700" />
        </Icon>
      </Slot>
      <Slot $w={14}><Caret /></Slot>
      <Slot $w={14}><Divider $h={25} /></Slot>
      <ActiveTool>
        <Icon w={14} h={20} vb="0 0 14 20">
          <path d="M1.500 2v12.500l3.600-3.300H12z" stroke="#041e49" strokeWidth="2" />
          <path d="M6 11l3.500 8" stroke="#041e49" strokeWidth="2.400" />
        </Icon>
      </ActiveTool>
      <Slot $w={40}>
        <Icon w={19} vb="0 0 19 19">
          <path d="M3 3l13 13" stroke={S} strokeWidth="2.400" />
          <circle cx="2.800" cy="2.800" r="2.600" fill={S} /><circle cx="16.200" cy="16.200" r="2.600" fill={S} />
        </Icon>
      </Slot>
      <Slot $w={14}><Caret /></Slot>
      <Slot $w={44}>
        <Icon w={21} h={21} vb="0 0 21 21">
          <circle cx="7.500" cy="7.500" r="6.500" stroke={S} strokeWidth="1.800" />
          <path d="M16.500 7.500H20V20H7.500v-3.500" stroke={S} strokeWidth="1.800" />
        </Icon>
      </Slot>
      <Slot $w={38}>
        <Icon w={23} vb="0 0 23 23">
          <path d="M1 1h4v4H1zM18 1h4v4h-4zM1 18h4v4H1zM18 18h4v4h-4z" stroke={S} strokeWidth="1.700" />
          <path d="M5 3h13M5 20h13M3 5v13M20 5v13M8 8.500h7M11.500 8.500V16" stroke={S} strokeWidth="1.700" />
        </Icon>
      </Slot>
      <Slot $w={42}>
        <Icon w={18} vb="0 0 18 18">
          <rect x=".9" y=".9" width="16.200" height="16.200" rx="1.500" stroke={S} strokeWidth="1.800" />
          <path d="M3.500 14l3-4 2.300 2.700L12 9l3 5z" fill={S} />
        </Icon>
      </Slot>
      <Slot $w={6}><Divider $h={25} /></Slot>
      <Slot $w={44}>
        <Swatched $bar="#cfe2f3">
          <Icon w={19} h={18} vb="0 0 19 18">
            <path d="M4 .5L13 9" stroke={S} strokeWidth="1.900" />
            <path d="M7 4L1.500 9.500 7 15.500l6-6z" stroke={S} strokeWidth="1.600" /><path d="M1.500 9.500h11L7 15.500z" fill={S} />
            <path d="M16 11.500q4 4.500 0 5-4-.5 0-5z" fill={S} stroke={S} />
          </Icon>
        </Swatched>
      </Slot>
      <Slot $w={41}>
        <Swatched $bar="#000">
          <Icon w={16} h={17} vb="0 0 16 17">
            <path d="M1 16v-3.500l8-8 3.300 3.300-8 8.200z" stroke={S} strokeWidth="1.700" />
            <path d="M10.500 3l2-2L16 4.500l-2 2z" fill={S} />
          </Icon>
        </Swatched>
      </Slot>
      <Slot $w={42}>
        <Icon w={18} h={16} vb="0 0 18 16">
          <path d="M0 0h18v4H0zM0 6h18v3H0zM0 11h18v2H0zM0 14.800h18V16H0z" fill={S} />
        </Icon>
      </Slot>
      <Slot $w={42}>
        <Icon w={18} h={16} vb="0 0 18 16">
          <path d="M0 2h18" stroke={S} strokeWidth="4" />
          <path d="M0 7h18" stroke={S} strokeWidth="2" strokeDasharray="8 2" />
          <path d="M0 10.800h18" stroke={S} strokeWidth="2" strokeDasharray="4.500 2.200" />
          <path d="M0 15h18" stroke={S} strokeWidth="2" strokeDasharray="1.800 1.400" />
        </Icon>
      </Slot>
      <Slot $w={10}><Divider $h={25} /></Slot>
      <Slot $w={15} />
      <Slot $w={78} $start><Text $size={17.500} $color={S} $ls={0.350}>Arial</Text></Slot>
      <Slot $w={18}><Caret /></Slot>
      <Slot $w={28}><Divider $h={25} /></Slot>
      <Slot $w={24}>
        <Icon w={4} h={16} vb="0 0 4 16">
          <circle cx="2" cy="2" r="2" fill={S} /><circle cx="2" cy="8" r="2" fill={S} /><circle cx="2" cy="14" r="2" fill={S} />
        </Icon>
      </Slot>
    </DrawTools>
    <CanvasFrame>
      <CanvasEdge $w={15} />
      <Canvas>
        <Stem />
        <Shape><Text $size={22} $weight={700} $ls={0.250} $color="#000" $font={`"Liberation Sans", Arial, sans-serif`}>Save</Text></Shape>
        <SelectFrame />
        {handles.map(([x, y]) => <Handle key={`${x}-${y}`} $x={x} $y={y} />)}
        <Diamond />
      </Canvas>
      <CanvasEdge $w={16} />
    </CanvasFrame>
  </Dialog>
);

/* ---------- screen sharing bar ---------- */

const ShareBar = styled.div`
  position: absolute;
  left: 596px;
  top: 991px;
  width: 453px;
  height: 28px;
  display: flex;
  border-radius: 8px 8px 0 0;
  overflow: hidden;
`;

const Sharing = styled.div`
  width: 331px;
  background: #23d959;
  display: flex;
  align-items: center;
`;

const StopShare = styled.div`
  flex: 1;
  background: #e02828;
  display: flex;
  align-items: center;
  padding-left: 10px;
  gap: 5px;
`;

const StopSquare = styled.i`
  width: 12px;
  height: 12px;
  margin-bottom: 4px;
  border-radius: 2px;
  background: #dffaff;
`;

const BottomLine = styled.i`
  position: absolute;
  left: 279px;
  top: 1019px;
  width: 1088px;
  height: 1px;
  background: #2f2f2f;
`;

/* ---------- taskbar ---------- */

const Taskbar = styled.div`
  height: 60px;
  flex: none;
  display: flex;
  align-items: center;
  border-top: 1px solid #b5a9ac;
  background: linear-gradient(90deg, #e8d4e6 0, #e8d4e4 380px, #ead3d8 500px, #f3e0cb 700px, #f8e9c4 830px, #f8e8c6 960px, #f5e0cb 1080px, #f4d8cf 1230px, #f1d9d2 1450px, #ecdad9 1700px, #e8d5de 1920px);
`;

const Weather = styled.div`
  width: 475px;
  padding-left: 24px;
  display: flex;
  align-items: center;
  gap: 9px;
`;

const Lines = styled.div<{ $end?: boolean }>`
  display: flex;
  flex-direction: column;
  align-items: ${(p) => (p.$end ? "flex-end" : "flex-start")};
  line-height: 20px;
  padding-bottom: 1px;
`;

const SearchPill = styled.div`
  width: 273px;
  height: 39px;
  margin-left: 18px;
  border-radius: 20px;
  background: #fbf6f2;
  border: 1px solid #ddcfc9;
  display: flex;
  align-items: center;
  padding: 0 6px 0 12px;
`;

const AppSlot = styled.div<{ $mark?: string }>`
  width: 55.100px;
  height: 100%;
  display: flex;
  align-items: center;
  justify-content: center;
  position: relative;
  ${(p) =>
    p.$mark &&
    css`
      &::after {
        content: "";
        position: absolute;
        bottom: 6px;
        width: ${p.$mark === "wide" ? 20 : 8}px;
        height: 4px;
        border-radius: 2px;
        background: ${p.$mark === "wide" ? "#a84ac4" : "#8b8070"};
      }
    `}
`;

const ActiveApp = styled.div`
  width: 48px;
  height: 49px;
  border-radius: 5px;
  background: rgba(255, 255, 255, 0.55);
  border: 1px solid rgba(255, 255, 255, 0.6);
  display: flex;
  align-items: center;
  justify-content: center;
`;

const AppIcon = styled.div`
  position: relative;
  width: 30px;
  height: 30px;
`;

const AppBadge = styled.div`
  position: absolute;
  right: -6px;
  top: -7px;
  width: 20px;
  height: 20px;
  border-radius: 50%;
  border: 1px solid #aab3bd;
  background: #eef3fa;
  display: flex;
  align-items: center;
  justify-content: center;
`;

const DellRing = styled.div`
  width: 30px;
  height: 30px;
  border: 2.500px solid #111;
  border-radius: 50%;
  display: flex;
  align-items: center;
  justify-content: center;
  font: 900 9.500px Lato, sans-serif;
  letter-spacing: -0.600px;
  color: #111;
  span { display: inline-block; transform: rotate(-28deg); }
`;

const ZoomApp = styled.div`
  width: 30px;
  height: 30px;
  border-radius: 12px;
  background: #0b5cff;
  display: flex;
  align-items: center;
  justify-content: center;
  font: 700 8.500px/10px ${SEGOE};
  letter-spacing: -0.300px;
  color: #fff;
  padding-bottom: 2px;
`;

const Notice = styled.div`
  width: 20px;
  height: 20px;
  border-radius: 50%;
  background: #8e3aa8;
  color: #fff;
  font: 400 12.500px/19px ${SEGOE};
  text-align: center;
`;

const Tray = styled.div`
  display: flex;
  align-items: center;
  height: 100%;
`;

const Chrome = () => (
  <Icon w={30}>
    <path d="M12 0A12 12 0 0 1 22.390 6H12a6 6 0 0 0-5.200 9L1.610 6A12 12 0 0 1 12 0z" fill="#e0372c" />
    <path d="M22.390 6A12 12 0 0 1 12 24l5.200-9A6 6 0 0 0 12 6z" fill="#fbc116" />
    <path d="M1.610 6A12 12 0 0 0 12 24l5.200-9a6 6 0 0 1-10.400 0z" fill="#279847" />
    <circle cx="12" cy="12" r="6" fill="#fff" />
    <circle cx="12" cy="12" r="4.700" fill="#3b7df0" />
  </Icon>
);

const Edge = ({ scene }: { scene?: boolean }) => (
  <Icon w={30} vb="0 0 30 30">
    <defs>
      <linearGradient id="eg" x1="0" y1="0.200" x2="1" y2="0.500">
        <stop offset="0" stopColor="#0c7fd0" /><stop offset=".5" stopColor="#2cc4d8" /><stop offset="1" stopColor="#5fdc5a" />
      </linearGradient>
    </defs>
    <path d="M0 14C1 5 7 0 15 0c9 0 15 6 15 12 0 5-3 8-8 8-4 0-5-2-4-3.500 2-3 0-6.500-5-7.500C7 8 1 11 0 14z" fill="url(#eg)" />
    <path d="M0 14c2-5 9-7 14-4.500-3 1.500-4.500 4-4 7 1 5 6 8 12 7 3 0 5-1 6.500-2.200C26 27 21 30 15 30 6 30-1 22 0 14z" fill="#0f62b0" />
    {scene
      ? <><path d="M1 19h14v4H2z" fill="#c9822f" /><path d="M2 22.500q7-2 13 1-1 5 0 6.500-9 0-13-7.500z" fill="#2f6a2c" /></>
      : <><circle cx="8" cy="20" r="3.500" fill="#7d8790" /><path d="M2 30v-3q0-3 3-3h6q3 0 3 3v3z" fill="#8d969e" /></>}
  </Icon>
);

const apps: { icon: React.ReactNode; mark?: string }[] = [
  {
    icon: (
      <Icon w={30} h={28} vb="0 0 30 28">
        <rect y="8" width="23" height="20" rx="1" fill="#262626" />
        <rect x="8" width="22" height="20" rx="1" fill="#f4f4f4" />
        <path d="M8 8h15v12H8z" fill="#bdbdbd" />
      </Icon>
    ),
  },
  {
    icon: (
      <Icon w={28} vb="0 0 28 28">
        <path d="M14 0a14 14 0 1 1-5 27L0 28l1.500-7A14 14 0 0 1 14 0z" fill="#6462c8" />
        <rect x="6" y="8" width="11" height="12" rx="2" fill="#fff" /><path d="M18 12l4-3v10l-4-3z" fill="#fff" />
      </Icon>
    ),
  },
  {
    mark: "dot",
    icon: (
      <Icon w={30} h={27} vb="0 0 30 27">
        <path d="M0 2q0-1 1-1h9l3 3v6H0z" fill="#dc9a06" />
        <path d="M0 6h13l2-2h15v21q0 2-2 2H2q-2 0-2-2z" fill="#fdc933" />
        <path d="M5 27v-5q0-2 2-2h16q2 0 2 2v5z" fill="#0f72c4" /><path d="M9 23.500h12" stroke="#083d78" strokeWidth="1.500" />
      </Icon>
    ),
  },
  { icon: <Edge scene /> },
  {
    icon: (
      <Icon w={30} h={30} vb="0 0 30 30">
        <path d="M8 6V3q0-2 2-2h10q2 0 2 2v3" stroke="#22b5f0" strokeWidth="2" />
        <path d="M0 5h30v22q0 3-3 3H3q-3 0-3-3z" fill="#12508e" />
        <path d="M9 12h5.500v5.500H9z" fill="#f25022" /><path d="M15.500 12H21v5.500h-5.500z" fill="#7fba00" />
        <path d="M9 18.500h5.500V24H9z" fill="#00a4ef" /><path d="M15.500 18.500H21V24h-5.500z" fill="#ffb900" />
      </Icon>
    ),
  },
  {
    mark: "dot",
    icon: (
      <Icon w={30} vb="0 0 30 30">
        <path d="M12 0q-4 3-2 5Q20-1 27 7q4 6 3 11-2 9-11 12-9 0-15-6l-4-9Q1 3 12 0z" fill="#2767c4" />
        <path d="M0 14Q1 3 12 0q-3 3-2 5-6 2-7 7z" fill="#3f97e6" />
        <path d="M3 13q7-5 16-2l2 3-1 10-7-1-6 3q-5-5-4-13z" fill="#f2f6fb" />
        <path d="M4 12l8 5 8-4" stroke="#9fb3c9" />
        <path d="M0 16q0 9 9 12.500-4-6-5-11z" fill="#24104a" />
      </Icon>
    ),
  },
  { icon: <DellRing>D<span>E</span>LL</DellRing> },
  {
    mark: "wide",
    icon: (
      <ActiveApp><AppIcon><Chrome /><AppBadge><Shield w={15} h={13} color="#6ea2dd" sw={2.600} /></AppBadge></AppIcon></ActiveApp>
    ),
  },
  {
    icon: (
      <Icon w={31} h={30} vb="0 0 31 30">
        <rect width="23" height="22" rx="2" fill="#eceef0" />
        <path d="M3 4.500h3M7.500 4.500h3M12 4.500h3M4.500 8v3M4.500 12.500v3" stroke="#d83b01" strokeWidth="3" />
        <path d="M18 6v14q0 3-2 5M11 17.500h9q3 0 5-1.500" stroke="#6f7b86" strokeWidth="2.600" />
        <circle cx="27.500" cy="16" r="2.500" stroke="#2196d8" strokeWidth="1.800" /><circle cx="16" cy="27" r="2.500" stroke="#2196d8" strokeWidth="1.800" />
      </Icon>
    ),
  },
  { icon: <Edge /> },
  {
    mark: "dot",
    icon: (
      <AppIcon>
        <Chrome />
        <AppBadge>
          <Icon w={16} vb="0 0 16 16">
            <path d="M8 8L3 3" stroke="#34a853" strokeWidth="3" /><path d="M8 8l5-5" stroke="#d93a8a" strokeWidth="3" />
            <path d="M8 8l5 5" stroke="#ea4335" strokeWidth="3" /><path d="M8 8l-5 5" stroke="#3b7df0" strokeWidth="3" />
          </Icon>
        </AppBadge>
      </AppIcon>
    ),
  },
  { mark: "dot", icon: <ZoomApp>zoom</ZoomApp> },
];

export default function App() {
  return (
    <Screen>
      <Global />
      <Browser />
      <Docs>
        <Spreadsheet />
        <Overlay><DrawingDialog /></Overlay>
      </Docs>
      <BottomLine />
      <ShareBar>
        <Sharing>
          <Slot $w={45}>
            <Icon w={13} h={12} vb="0 0 13 12"><path d="M5 0l5 4.500H8q0 4.500 5 5.500v2Q4 12 3.500 4.500H0z" fill="#0c5a14" /></Icon>
          </Slot>
          <Slot $w={208}>
            <Text $size={14.500} $weight={700} $ls={-0.280} $font={SEGOE} $color="#1b3340">You are screen sharing</Text>
          </Slot>
          <Slot $w={55}>
            <Icon w={15} vb="0 0 15 15"><circle cx="7.500" cy="7.500" r="6.600" stroke="#145a20" strokeWidth="1.400" /><circle cx="7.500" cy="7.500" r="3.500" fill="#f0413c" /></Icon>
          </Slot>
          <Slot $w={5}>
            <Icon w={13} h={15} vb="0 0 13 15"><path d="M6.500 0L13 2.500v5q0 5-6.500 7.500Q0 12.500 0 7.500v-5z" fill="#235012" /><path d="M3.500 7l2.300 2.500L9.500 5" stroke="#23d959" strokeWidth="1.500" /></Icon>
          </Slot>
        </Sharing>
        <StopShare>
          <StopSquare />
          <Text $size={14} $weight={700} $ls={-0.250} $font={SEGOE} $color="#fff">Stop Share</Text>
        </StopShare>
      </ShareBar>
      <Taskbar>
        <Weather>
          <Icon w={31} h={26} vb="0 0 31 26">
            <circle cx="22" cy="8" r="7.500" fill="#f38a14" />
            <path d="M7 25a6.500 6.500 0 0 1-1-12.900A9 9 0 0 1 22 10a8 8 0 0 1 2 15z" fill="#a9c8f5" />
            <path d="M7 25a6.500 6.500 0 0 1 0-12q5 1 8 4 4-5 9-5a6.500 6.500 0 0 1 0 13z" fill="#cfe0fb" />
          </Icon>
          <Lines>
            <Text $size={14.500} $font={SEGOE} $ls={-0.400}>28°C</Text>
            <Text $size={14.500} $font={`"DejaVu Sans", sans-serif`} $color="#5c5560" dir="rtl">غائم غالبًا</Text>
          </Lines>
        </Weather>
        <Icon w={29} vb="0 0 29 29">
          <defs><linearGradient id="win" x1="0" y1="0" x2="1" y2="1"><stop offset="0" stopColor="#4cc8f8" /><stop offset="1" stopColor="#0873d2" /></linearGradient></defs>
          <path d="M0 1q0-1 1-1h13v14H0zM15 0h13q1 0 1 1v13H15zM0 15h14v14H1q-1 0-1-1zM15 15h14v13q0 1-1 1H15z" fill="url(#win)" />
        </Icon>
        <SearchPill>
          <Icon w={20} vb="0 0 20 20"><circle cx="8.500" cy="8" r="6.800" stroke="#222" strokeWidth="2" /><path d="M13 13l5.500 5.500" stroke="#222" strokeWidth="2.400" /></Icon>
          <Slot $w={12} />
          <Text $size={16.500} $font={SEGOE} $ls={-0.200} $color="#5d5b5b">Search</Text>
          <Spacer />
          <Icon w={26} vb="0 0 26 26">
            <path d="M13 1a12 12 0 1 1-5 23H1.500V13A12 12 0 0 1 13 1z" fill="#eef7ff" stroke="#1e82e8" strokeWidth="1.800" />
            <path d="M9 5l3 1.500V15l-3 3z" fill="#24a8ee" /><path d="M9 17.500l2 2.500 6-3.500q2.500-3 0-5l-4.500-1.500 1 3 2 1z" fill="#175fdc" />
          </Icon>
        </SearchPill>
        <Slot $w={2.500} />
        {apps.map((a, i) => <AppSlot key={i} $mark={a.mark}>{a.icon}</AppSlot>)}
        <Spacer />
        <Tray>
          <Slot $w={40}><Icon w={13} h={8} vb="0 0 13 8"><path d="M1 7l5.500-5.500L12 7" stroke="#222" strokeWidth="1.700" /></Icon></Slot>
          <Slot $w={41}>
            <Icon w={14} h={20} vb="0 0 14 20"><rect x="4" y="1" width="6" height="11" rx="3" stroke="#9a4fb0" strokeWidth="1.500" fill="#dcb4e2" /><path d="M1 9q0 6 6 6t6-6M7 15v5" stroke="#9a4fb0" strokeWidth="1.500" /></Icon>
          </Slot>
          <Slot $w={55}><Text $size={14.500} $font={SEGOE} $ls={-0.300}>ENG</Text></Slot>
          <Slot $w={38}>
            <Icon w={20} h={15} vb="0 0 20 15"><path d="M1 5.500q9-8 18 0M3.700 8.500q6.300-6 12.600 0M6.500 11.300q3.500-3.500 7 0" stroke="#222" strokeWidth="1.500" /><circle cx="10" cy="13.300" r="1.500" fill="#222" /></Icon>
          </Slot>
          <Slot $w={23}>
            <Icon w={19} h={16} vb="0 0 19 16"><path d="M1 5.500h3L9 1v14l-5-4.500H1zM11.500 5q2 3 0 6M14 3q3.500 5 0 10" stroke="#222" strokeWidth="1.300" /><path d="M16.500 1q4 7 0 14" stroke="#999" /></Icon>
          </Slot>
          <Slot $w={37}>
            <Icon w={20} h={17} vb="0 0 20 17"><path d="M8 4h8q2 0 2 2v8q0 2-2 2H4q-2 0-2-2v-4" stroke="#111" strokeWidth="1.600" /><path d="M4 13l4-7h8v8H4zM18.500 8H20v4h-1.500z" fill="#111" /><path d="M4 0L0 6h3l-1 5 5-7H4z" fill="#111" /></Icon>
          </Slot>
          <Slot $w={9} />
          <Slot $w={77}>
            <Lines $end>
              <Text $size={14.500} $font={SEGOE} $ls={0.100}>11:17 AM</Text>
              <Text $size={14.500} $font={SEGOE} $ls={0.100}>5/15/2023</Text>
            </Lines>
          </Slot>
          <Slot $w={50} $start><Slot $w={5} /><Notice>2</Notice></Slot>
        </Tray>
      </Taskbar>
    </Screen>
  );
}
